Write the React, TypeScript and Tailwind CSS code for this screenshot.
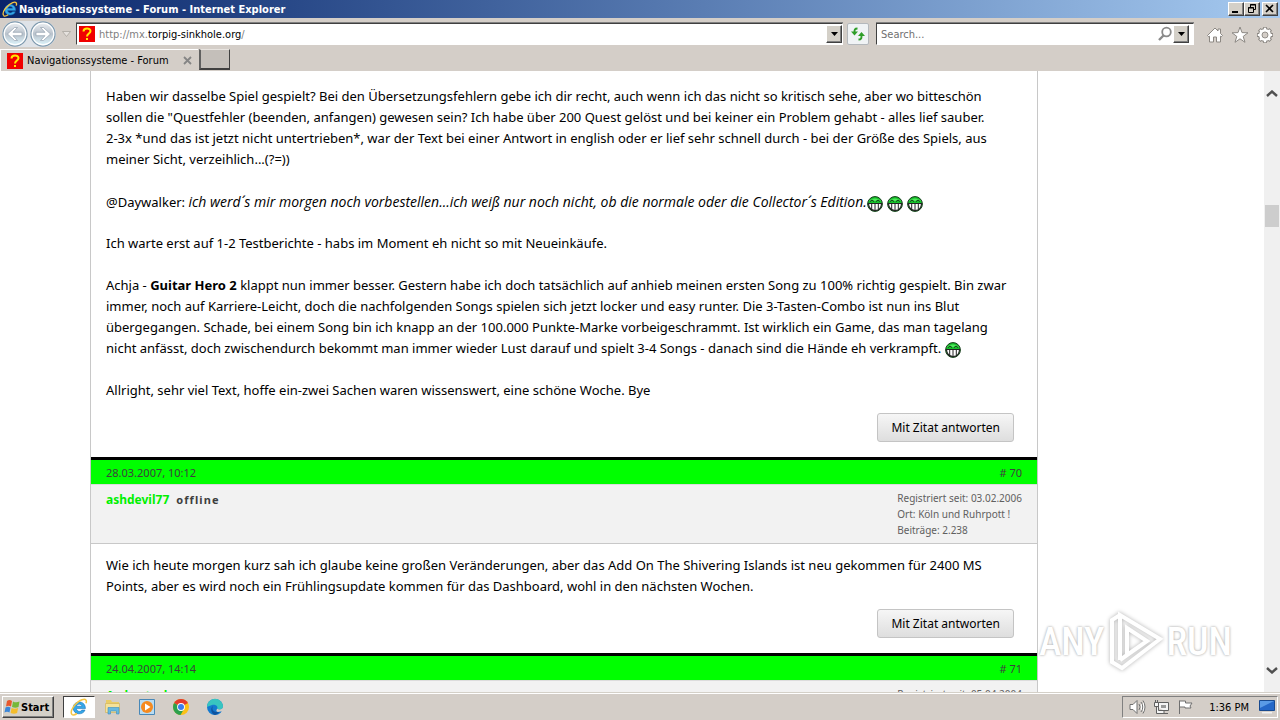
import React from "react";

const bevel =
  "border border-t-white border-l-white border-r-[#404040] border-b-[#404040] bg-[#d4d0c8] shadow-[inset_-1px_-1px_0_#808080]";

function IeLogo({ className }: { className: string }) {
  return (
    <svg viewBox="0 0 18 18" className={className} aria-hidden="true">
      <path d="M15.400 10.600H6.400c.2 3.200 4.400 3.600 5.500 1.500h3.100c-1.600 5.200-11.800 5.300-11.800-2.100 0-8 12.400-8.300 12.200.6zM6.500 8.200h5.400c-.2-2.700-5-2.800-5.400 0z" fill="#35a8e8" stroke="#1670b8" strokeWidth=".6" />
      <path d="M2 16.500C-1 13 6 4 12 1.800c4-1.500 5 .6 4 3.400M2 16.500c1.200 1 3.400 0 5-1" fill="none" stroke="#f5c542" strokeWidth="1.500" />
    </svg>
  );
}

function Favicon() {
  return (
    <svg viewBox="0 0 16 16" className="size-4 shrink-0" aria-hidden="true">
      <rect width="16" height="16" fill="#f00000" />
      <path d="M4.500 5.500c0-4 7-4 7-.5 0 2.500-3.500 2.500-3.500 5.500" fill="none" stroke="#ffe800" strokeWidth="2" />
      <rect x="7" y="12" width="2" height="2" fill="#ffe800" />
    </svg>
  );
}

function NavArrow({ back, label }: { back?: boolean; label: string }) {
  return (
    <button type="button" aria-label={label} className="size-[26px] shrink-0">
      <svg viewBox="0 0 26 26" className="size-[26px]">
        <defs>
          <linearGradient id={back ? "orbBack" : "orbNext"} x1="0" y1="0" x2="0" y2="1">
            <stop offset="0" stopColor="#eef1f4" />
            <stop offset=".5" stopColor="#b9c2cc" />
            <stop offset="1" stopColor="#e0f8ff" />
          </linearGradient>
        </defs>
        <circle cx="13" cy="13" r="12" fill={back ? "url(#orbBack)" : "url(#orbNext)"} stroke="#7f9aae" strokeWidth="1.300" />
        <circle cx="13" cy="13" r="10.800" fill="none" stroke="#fff" strokeWidth="1.200" />
        <path
          d={back ? "M5.500 13l7-6.500h3l-4.500 4.800h9v3.400h-9l4.500 4.800h-3z" : "M20.500 13l-7-6.500h-3l4.500 4.800H6v3.400h9l-4.500 4.800h3z"}
          fill="#fff"
          stroke="#93a1af"
          strokeWidth=".7"
        />
      </svg>
    </button>
  );
}

function DropButton({ label }: { label: string }) {
  return (
    <button type="button" aria-label={label} className={`flex h-[18px] w-4 shrink-0 items-center justify-center ${bevel}`}>
      <svg viewBox="0 0 7 4" className="h-1 w-[7px]">
        <path d="M0 0h7L3.500 4z" fill="#000" />
      </svg>
    </button>
  );
}

function TitleBar() {
  return (
    <header className="flex h-[18px] shrink-0 items-center bg-linear-to-r from-[#0a246a] to-[#a6caf0] px-[2px]">
      <IeLogo className="size-4 shrink-0" />
      <h1 className="ml-px flex-1 pt-px text-[11px] leading-4 font-bold text-white">Navigationssysteme - Forum - Internet Explorer</h1>
      <div className="flex">
        <button type="button" aria-label="Minimize" className={`h-[14px] w-4 ${bevel}`}>
          <svg viewBox="0 0 14 12" className="h-3 w-[14px]"><path d="M3 8h6v2H3z" /></svg>
        </button>
        <button type="button" aria-label="Restore" className={`mr-[2px] h-[14px] w-4 ${bevel}`}>
          <svg viewBox="0 0 14 12" className="h-3 w-[14px]" fill="none" stroke="#000">
            <path d="M5.500 4V1.500h5v5H8M5 2h6M3.500 4.500h5v5h-5zM3 5h6" />
          </svg>
        </button>
        <button type="button" aria-label="Close" className={`h-[14px] w-4 ${bevel}`}>
          <svg viewBox="0 0 14 12" className="h-3 w-[14px]" fill="none" stroke="#000" strokeWidth="1.600">
            <path d="M3 2l7 7M10 2l-7 7" />
          </svg>
        </button>
      </div>
    </header>
  );
}

const field = "flex h-[22px] items-center border border-t-[#404040] border-l-[#404040] border-r-white border-b-white bg-white shadow-[0_-1px_0_#808080]";

function AddressRow() {
  return (
    <div className="flex h-[31px] shrink-0 items-center pr-[6px] pl-[2px]">
      <div className="flex items-center gap-[2px] rounded-full bg-[#dfe3e8]">
        <NavArrow back label="Back" />
        <NavArrow label="Forward" />
      </div>
      <button type="button" aria-label="Recent pages" className="mx-[5px] flex w-[10px] justify-center">
        <svg viewBox="0 0 9 6" className="h-[6px] w-[9px]"><path d="M.5.5h8l-4 5z" fill="#e6e2de" stroke="#aaa6a0" strokeWidth=".8" /></svg>
      </button>
      <div className={`min-w-0 flex-1 pl-[2px] ${field}`}>
        <Favicon />
        <a href="http://mx.torpig-sinkhole.org/" className="ml-1 flex-1 pt-[2px] text-[11px] leading-4 text-black">
          <span className="text-[#808080]">http://mx.</span>torpig-sinkhole.org<span className="text-[#808080]">/</span>
        </a>
        <DropButton label="Show address history" />
      </div>
      <button type="button" aria-label="Refresh" className="mr-[7px] ml-1 flex h-[22px] w-[22px] items-center justify-center rounded-[2px] border border-[#b4b8bc] bg-[#f0f3f5]">
        <svg viewBox="0 0 16 14" className="h-[14px] w-4 shrink-0" fill="none" stroke="#2f9e28" strokeWidth="1.900">
          <path d="M7.500 1.500C4.500 1.500 4.500 3 4.500 5M8.500 12.500c3 0 3-1.500 3-4" />
          <path d="M1 4.500h7L4.500 8.500zM8 9h7l-3.500-4z" fill="#2f9e28" stroke="none" />
        </svg>
      </button>
      <div className={`w-[318px] pr-1 ${field}`}>
        <input type="text" aria-label="Search" placeholder="Search..." className="min-w-0 flex-1 pt-[2px] pl-1 text-[11px] leading-4 outline-none placeholder:text-[#707070]" />
        <svg viewBox="0 0 16 16" className="size-4" fill="none" stroke="#8a8a8a" strokeWidth="1.800">
          <circle cx="9.500" cy="6" r="4.300" />
          <path d="M6.500 9.500L2 14" strokeWidth="2.400" />
        </svg>
        <DropButton label="Search options" />
      </div>
      <div className="ml-3 flex items-center gap-[7px] pt-[2px]">
        <button type="button" aria-label="Home">
          <svg viewBox="0 0 18 18" className="size-[18px]" fill="#fff" stroke="#8c8883" strokeWidth="1">
            <path d="M1.500 9.500L9 2l3 3V3h2.500v4.500l2 2-1.300 1.300-.7-.6V16h-4v-5h-3v5h-4v-5.800l-.7.6z" />
          </svg>
        </button>
        <button type="button" aria-label="Favorites">
          <svg viewBox="0 0 18 18" className="size-[18px]" fill="#fff" stroke="#8c8883" strokeWidth="1">
            <path d="M9 1l2 5.600 6 .2-4.800 3.600 1.800 5.900L9 12.800l-5 3.500 1.800-5.900L1 6.800l6-.2z" />
          </svg>
        </button>
        <button type="button" aria-label="Tools">
          <svg viewBox="0 0 18 18" className="size-[18px]" fill="none">
            <path d="M9 1v16M1 9h16M3.300 3.300l11.400 11.400M14.700 3.300L3.300 14.700" stroke="#8c8883" strokeWidth="3.800" />
            <circle cx="9" cy="9" r="4.800" stroke="#8c8883" strokeWidth="4.400" />
            <path d="M9 1.800v14.400M1.800 9h14.400M4 4l10 10M14 4L4 14" stroke="#fff" strokeWidth="2.200" />
            <circle cx="9" cy="9" r="4.600" stroke="#fff" strokeWidth="2.800" />
            <circle cx="9" cy="9" r="3" fill="#d4cec8" stroke="#8c8883" strokeWidth=".9" />
          </svg>
        </button>
      </div>
    </div>
  );
}

function TabRow() {
  return (
    <nav className="flex h-[22px] shrink-0 items-start">
      <div className="flex h-[22px] w-[198px] items-center border-t border-l border-white px-[6px]">
        <Favicon />
        <span className="ml-1 flex-1 pt-px text-[11px] leading-4 whitespace-nowrap">Navigationssysteme - Forum</span>
        <button type="button" aria-label="Close tab">
          <svg viewBox="0 0 9 9" className="size-[9px]"><path d="M1 1l7 7M8 1L1 8" stroke="#858585" strokeWidth="1.800" /></svg>
        </button>
      </div>
      <button type="button" aria-label="New tab" className="ml-px h-[21px] w-[31px] border-t border-r border-b-2 border-l-2 border-t-[#e8e4e0] border-r-[#404040] border-b-[#404040] border-l-[#606060] bg-[#c4bfba]" />
    </nav>
  );
}

function Grin() {
  return (
    <svg viewBox="0 0 16 16" role="img" aria-label="Grinning smiley" className="mr-1 inline-block size-4 align-[-5px]">
      <circle cx="8" cy="8" r="7.400" fill="#16c12b" stroke="#17391b" strokeWidth="1" />
      <path d="M2 5a7 5 0 0 1 12 0" fill="#50e85c" />
      <path d="M3 5.500l2-1.500 2 1.500M9 5.500l2-1.500 2 1.500" fill="none" stroke="#0b3a10" strokeWidth="1" />
      <path d="M1.500 7.500h13c0 4-2.500 7-6.500 7s-6.500-3-6.500-7z" fill="#fff" stroke="#222" strokeWidth="1.200" />
      <path d="M4.700 8v5M8 8v6M11.300 8v5" stroke="#222" strokeWidth="1" />
    </svg>
  );
}

function Acute() {
  return <span className="font-['Noto_Sans',sans-serif]">´</span>;
}

function QuoteButton() {
  return (
    <div className="flex justify-end pt-3 pr-2 pb-[15px]">
      <button type="button" className="h-[29px] rounded-[3px] border border-[#c4c4c4] bg-linear-to-b from-[#f6f6f6] to-[#dedede] px-[13px] text-[12px] whitespace-nowrap text-black">
        Mit Zitat antworten
      </button>
    </div>
  );
}

type PostHeadProps = { date: string; no: string; user: string; joined: string; place?: string; posts?: string };

function PostHead({ date, no, user, joined, place, posts }: PostHeadProps) {
  return (
    <header>
      <div className="flex h-[27px] items-center justify-between border-t-[3px] border-black bg-[#00ff00] px-[15px] text-[11px] text-[#3e3e3e]">
        <time>{date}</time>
        <a href="#post"># {no}</a>
      </div>
      <div className="flex h-[60px] justify-between border-t border-b border-t-[#dcdcdc] border-b-[#c8c8c8] bg-[#f2f2f2] px-[15px] pt-[5px]">
        <p className="flex h-[18px] items-center gap-[7px]">
          <a href="#user" className="text-[12px] font-bold text-[#00f000]">{user}</a>
          <span className="text-[11px] font-bold tracking-widest text-[#3e3e3e]">offline</span>
        </p>
        <div className="text-[10px] leading-4 whitespace-nowrap text-[#606060]">
          <p>Registriert seit: {joined}</p>
          {place && <p>Ort: {place}</p>}
          {posts && <p>Beiträge: {posts}</p>}
        </div>
      </div>
    </header>
  );
}

function Page() {
  return (
    <main className="mr-[226px] ml-[90px] min-w-0 flex-1 self-start border-x border-[#c8c8c8] bg-white font-['Noto_Sans','Open_Sans',sans-serif] text-[13px] leading-[21px] text-black">
      <article>
        <div className="px-[15px] pt-[15px] whitespace-nowrap">
          <p>
            Haben wir dasselbe Spiel gespielt? Bei den Übersetzungsfehlern gebe ich dir recht, auch wenn ich das nicht so kritisch sehe, aber wo bitteschön<br />
            sollen die "Questfehler (beenden, anfangen) gewesen sein? Ich habe über 200 Quest gelöst und bei keiner ein Problem gehabt - alles lief sauber.<br />
            2-3x *und das ist jetzt nicht untertrieben*, war der Text bei einer Antwort in english oder er lief sehr schnell durch - bei der Größe des Spiels, aus<br />
            meiner Sicht, verzeihlich...(?=))
          </p>
          <p className="mt-[21px] h-[21px]">
            @Daywalker: <i className="font-['Open_Sans',sans-serif] text-[14px]">ich werd<Acute />s mir morgen noch vorbestellen...ich weiß nur noch nicht, ob die normale oder die Collector<Acute />s Edition.</i>
            <Grin /><Grin /><Grin />
          </p>
          <p className="mt-[21px]">Ich warte erst auf 1-2 Testberichte - habs im Moment eh nicht so mit Neueinkäufe.</p>
          <p className="mt-[21px] h-[84px]">
            Achja - <b>Guitar Hero 2</b> klappt nun immer besser. Gestern habe ich doch tatsächlich auf anhieb meinen ersten Song zu 100% richtig gespielt. Bin zwar<br />
            immer, noch auf Karriere-Leicht, doch die nachfolgenden Songs spielen sich jetzt locker und easy runter. Die 3-Tasten-Combo ist nun ins Blut<br />
            übergegangen. Schade, bei einem Song bin ich knapp an der 100.000 Punkte-Marke vorbeigeschrammt. Ist wirklich ein Game, das man tagelang<br />
            nicht anfässt, doch zwischendurch bekommt man immer wieder Lust darauf und spielt 3-4 Songs - danach sind die Hände eh verkrampft. <Grin />
          </p>
          <p className="mt-[21px]">Allright, sehr viel Text, hoffe ein-zwei Sachen waren wissenswert, eine schöne Woche. Bye</p>
          <QuoteButton />
        </div>
      </article>
      <article>
        <PostHead date="28.03.2007, 10:12" no="70" user="ashdevil77" joined="03.02.2006" place="Köln und Ruhrpott !" posts="2.238" />
        <div className="px-[15px] pt-[11px] whitespace-nowrap">
          <p>
            Wie ich heute morgen kurz sah ich glaube keine großen Veränderungen, aber das Add On The Shivering Islands ist neu gekommen für 2400 MS<br />
            Points, aber es wird noch ein Frühlingsupdate kommen für das Dashboard, wohl in den nächsten Wochen.
          </p>
          <QuoteButton />
        </div>
      </article>
      <article>
        <PostHead date="24.04.2007, 14:14" no="71" user="Awkasteck" joined="05.04.2004" />
      </article>
    </main>
  );
}

function ScrollBar() {
  return (
    <div role="scrollbar" aria-label="Page scroll" aria-controls="page" aria-valuenow={20} className="flex w-4 shrink-0 flex-col items-center bg-[#f0f0f0] pt-[19px] pb-[18px]">
      <svg viewBox="0 0 12 7" className="h-[7px] w-3" fill="none" stroke="#505050" strokeWidth="2.400"><path d="M1 6l5-4.500L11 6" /></svg>
      <div className="mt-[108px] h-[22px] w-[14px] shrink-0 bg-[#cdcdcd]" />
      <svg viewBox="0 0 12 7" className="mt-auto h-[7px] w-3" fill="none" stroke="#505050" strokeWidth="2.400"><path d="M1 1l5 4.500L11 1" /></svg>
    </div>
  );
}

function Watermark() {
  return (
    <div className="pointer-events-none absolute right-12 bottom-[18px] flex h-16 items-center gap-[2px] font-['Roboto_Condensed','Liberation_Sans_Narrow',sans-serif] text-[38px] leading-none font-medium text-white [text-shadow:0_0_3px_#b4b4b4,0_0_2px_#ccc]">
      <span>ANY</span>
      <svg viewBox="0 0 58 64" className="h-16 w-[58px] drop-shadow-[0_0_2px_#b0b0b0]" fill="none" stroke="#fff" strokeWidth="4">
        <path d="M14 50V5l40 24-38 29-10-6V14M14 5L6 10v8M21 44V18l20 13-27 19" />
      </svg>
      <span>RUN</span>
    </div>
  );
}

function TaskBar() {
  return (
    <footer className="flex h-7 shrink-0 items-center border-t border-[#d4d0c8] bg-[#d4cec8] px-[2px] shadow-[inset_0_1px_0_#fff]">
      <button type="button" className={`flex h-[22px] w-[52px] items-center gap-px pl-px text-[11px] font-bold ${bevel}`}>
        <svg viewBox="0 0 16 16" className="size-4 shrink-0">
          <path d="M3 2q2.500-2 5 0L7 7.500q-2.500-1.500-5 0z" fill="#e8582c" />
          <path d="M9 2.400q3 1.700 6.500.1L14.500 8q-3 1.500-6.500 0z" fill="#76b83a" />
          <path d="M1.500 8.500q2.500-1.500 5 0l-1 5q-2.500-1.500-5 0z" fill="#3b86d8" />
          <path d="M7.600 9q3 1.500 6.500 0l-1 5q-3 1.500-6.500 0z" fill="#f4bd2c" />
        </svg>
        <span className="pt-[2px] leading-4">Start</span>
      </button>
      <div className="ml-[9px] flex items-center gap-4">
        <button type="button" aria-label="Internet Explorer" className="mr-[-7px] flex h-[22px] w-8 items-center justify-center border border-t-[#404040] border-l-[#404040] border-r-white border-b-white bg-white">
          <IeLogo className="size-[18px]" />
        </button>
        <button type="button" aria-label="File Explorer">
          <svg viewBox="0 0 18 18" className="size-[18px]">
            <path d="M2 2h5l1 2h7v4H2z" fill="#e9cc67" />
            <path d="M1.500 5.500h14v9h-14z" fill="#f5e29a" stroke="#cfae50" strokeWidth=".6" />
            <path d="M4 16V9.500h11V16h-2.500v-3h-6v3z" fill="#68b9e0" stroke="#3d8fc0" strokeWidth=".6" />
          </svg>
        </button>
        <button type="button" aria-label="Media Player">
          <svg viewBox="0 0 18 18" className="size-[18px]">
            <path d="M1.500 1.500h15v15h-15z" fill="#b9dcf2" stroke="#4888b8" />
            <circle cx="9" cy="9" r="6" fill="#f58a1f" />
            <path d="M7 5.500v7l5.500-3.500z" fill="#fff" />
          </svg>
        </button>
        <button type="button" aria-label="Chrome">
          <svg viewBox="0 0 18 18" className="size-[18px]">
            <circle cx="9" cy="9" r="8" fill="#fbc116" />
            <path d="M9 9L2.070 5A8 8 0 0 1 15.930 5z" fill="#e33b2e" />
            <path d="M9 9L2.070 5A8 8 0 0 0 8.500 17L12 11z" fill="#2da04e" />
            <circle cx="9" cy="9" r="3.900" fill="#fff" />
            <circle cx="9" cy="9" r="3" fill="#3b7ded" />
          </svg>
        </button>
        <button type="button" aria-label="Edge">
          <svg viewBox="0 0 18 18" className="size-[18px]">
            <circle cx="9" cy="9" r="8" fill="#1479cf" />
            <path d="M1 9a8 8 0 0 1 16-.5c0 3-4 3.500-5.800 2.300C12.500 8 9 6.200 6 7S1.500 9 1 9z" fill="#38c5c0" />
            <path d="M7 8c-2 4 1 7 6.500 5.800A8 8 0 0 1 9 17C5 16 4 10 7 8z" fill="#0f539f" />
            <path d="M11.200 10.800c1.800 1.200 5.800.7 5.800-1.800l.5 4-4 .8c-3 .6-4-1-2.300-3z" fill="#d4cec8" />
          </svg>
        </button>
      </div>
      <div className="ml-auto flex h-[22px] items-center gap-[7px] border border-t-[#808080] border-l-[#808080] border-r-white border-b-white pr-[2px] pl-[6px]">
        <svg viewBox="0 0 17 16" className="h-4 w-[17px]" fill="#fff" stroke="#707070"><path d="M1 5.500h3l4-4v13l-4-4H1zM10 5q2 3 0 6M12 3q3.500 5 0 10M14 1.500q4 6.500 0 13" /></svg>
        <svg viewBox="0 0 17 16" className="h-4 w-[17px]" fill="#f4f4f4" stroke="#606060"><path d="M5.500 3.500h10v8h-10zM8 14.500h7M1.500 3.500h4v4h-4zM2.500 1v2M4.500 1v2M3.500 8v6.500H11v-3" /><path d="M8 6h5v3H8z" fill="#999" stroke="none" /></svg>
        <svg viewBox="0 0 17 16" className="h-4 w-[17px]" fill="#fff" stroke="#707070"><path d="M2.500 15V1.500M2.500 2h6v2H15l-2 3 1 2H8V8H2.500" /></svg>
        <time className="ml-2 pt-[2px] text-[11px] leading-4 whitespace-nowrap">1:36 PM</time>
        <svg viewBox="0 0 16 14" className="ml-[3px] h-[14px] w-4"><path d="M.5.500h15v10H.5z" fill="#2568c8" stroke="#184a90" /><path d="M1 1h14L1 8z" fill="#5a9be6" /><path d="M3 12h10v1.500H3z" fill="#f0f0f0" /></svg>
      </div>
    </footer>
  );
}

export default function App() {
  return (
    <div className="relative flex h-screen flex-col overflow-hidden bg-[#d4cec8] font-['DejaVu_Sans_Condensed','DejaVu_Sans',sans-serif] text-black">
      <TitleBar />
      <AddressRow />
      <TabRow />
      <div id="page" className="relative flex min-h-0 flex-1 overflow-hidden bg-white">
        <Page />
        <ScrollBar />
        <Watermark />
      </div>
      <TaskBar />
    </div>
  );
}
